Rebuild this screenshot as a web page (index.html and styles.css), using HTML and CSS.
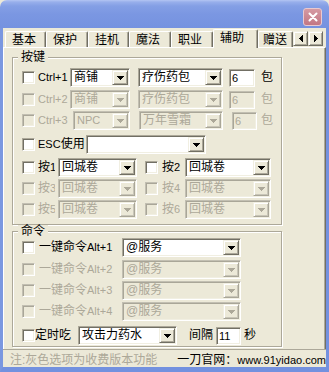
FILE: index.html
```html
<!DOCTYPE html>
<html lang="zh-CN">
<head>
<meta charset="utf-8">
<title>辅助</title>
<link rel="stylesheet" href="styles.css">
</head>
<body>
<div class="win">
  <div class="titlebar">
    <button class="close" aria-label="关闭"><svg width="10" height="10" viewBox="0 0 10 10"><path d="M1.5 1.5l7 7M8.5 1.5l-7 7" stroke="#fff" stroke-width="2" stroke-linecap="round"/></svg></button>
  </div>
  <div class="frame">
    <div class="tabstrip">
      <div class="tablist">
        <span class="tab t41">基本</span>
        <span class="tab t42">保护</span>
        <span class="tab t41">挂机</span>
        <span class="tab t42">魔法</span>
        <span class="tab t42">职业</span>
        <span class="tab sel">辅助</span>
        <span class="tab last">赠送</span>
      </div>
      <div class="scroll">
        <span class="sbtn"><svg width="4" height="7" viewBox="0 0 4 7"><path d="M3 0h1v7H3zM2 1h1v5H2zM1 2h1v3H1zM0 3h1v1H0z"/></svg></span>
        <span class="sbtn"><svg width="4" height="7" viewBox="0 0 4 7"><path d="M0 0h1v7H0zM1 1h1v5H1zM2 2h1v3H2zM3 3h1v1H3z"/></svg></span>
      </div>
    </div>

    <div class="panel">
      <fieldset class="group g1">
        <legend>按键</legend>

        <div class="row mt4">
          <span class="cb"></span>
          <span class="lbl ml3 w32 lt">Ctrl+1</span>
          <span class="combo w60"><span class="val">商铺</span><span class="btn"><svg width="7" height="4" viewBox="0 0 7 4"><path d="M0 0h7v1H0zM1 1h5v1H1zM2 2h3v1H2zM3 3h1v1H3z"/></svg></span></span>
          <span class="combo w85 ml8"><span class="val">疗伤药包</span><span class="btn"><svg width="7" height="4" viewBox="0 0 7 4"><path d="M0 0h7v1H0zM1 1h5v1H1zM2 2h3v1H2zM3 3h1v1H3z"/></svg></span></span>
          <span class="inp w26 ml6 lt">6</span>
          <span class="lbl ml6">包</span>
        </div>

        <div class="row mt3 dis">
          <span class="cb"></span>
          <span class="lbl ml3 w32 lt">Ctrl+2</span>
          <span class="combo w60"><span class="val">商铺</span><span class="btn"><svg width="7" height="4" viewBox="0 0 7 4"><path d="M0 0h7v1H0zM1 1h5v1H1zM2 2h3v1H2zM3 3h1v1H3z"/></svg></span></span>
          <span class="combo w85 ml8"><span class="val">疗伤药包</span><span class="btn"><svg width="7" height="4" viewBox="0 0 7 4"><path d="M0 0h7v1H0zM1 1h5v1H1zM2 2h3v1H2zM3 3h1v1H3z"/></svg></span></span>
          <span class="inp w26 ml6 lt">6</span>
          <span class="lbl ml6">包</span>
        </div>

        <div class="row mt2 dis">
          <span class="cb"></span>
          <span class="lbl ml3 w35 lt">Ctrl+3</span>
          <span class="combo w57"><span class="val lt">NPC</span><span class="btn"><svg width="7" height="4" viewBox="0 0 7 4"><path d="M0 0h7v1H0zM1 1h5v1H1zM2 2h3v1H2zM3 3h1v1H3z"/></svg></span></span>
          <span class="combo w84 ml9"><span class="val">万年雪霜</span><span class="btn"><svg width="7" height="4" viewBox="0 0 7 4"><path d="M0 0h7v1H0zM1 1h5v1H1zM2 2h3v1H2zM3 3h1v1H3z"/></svg></span></span>
          <span class="inp w25 ml9 lt">6</span>
          <span class="lbl ml4">包</span>
        </div>

        <div class="row mt5">
          <span class="cb"></span>
          <span class="lbl ml3 w48"><span class="lt">ESC</span>使用</span>
          <span class="combo w120"><span class="val"></span><span class="btn"><svg width="7" height="4" viewBox="0 0 7 4"><path d="M0 0h7v1H0zM1 1h5v1H1zM2 2h3v1H2zM3 3h1v1H3z"/></svg></span></span>
        </div>

        <div class="row mt4">
          <span class="cb"></span>
          <span class="lbl clip ml3 w17">按<span class="lt">1</span></span>
          <span class="combo w79 ml3"><span class="val">回城卷</span><span class="btn"><svg width="7" height="4" viewBox="0 0 7 4"><path d="M0 0h7v1H0zM1 1h5v1H1zM2 2h3v1H2zM3 3h1v1H3z"/></svg></span></span>
          <span class="cb ml8"></span>
          <span class="lbl clip ml4 w20">按<span class="lt">2</span></span>
          <span class="combo w86 ml3"><span class="val">回城卷</span><span class="btn"><svg width="7" height="4" viewBox="0 0 7 4"><path d="M0 0h7v1H0zM1 1h5v1H1zM2 2h3v1H2zM3 3h1v1H3z"/></svg></span></span>
        </div>

        <div class="row mt2 dis">
          <span class="cb"></span>
          <span class="lbl clip ml3 w17">按<span class="lt">3</span></span>
          <span class="combo w79 ml3"><span class="val">回城卷</span><span class="btn"><svg width="7" height="4" viewBox="0 0 7 4"><path d="M0 0h7v1H0zM1 1h5v1H1zM2 2h3v1H2zM3 3h1v1H3z"/></svg></span></span>
          <span class="cb ml8"></span>
          <span class="lbl clip ml4 w20">按<span class="lt">4</span></span>
          <span class="combo w86 ml3"><span class="val">回城卷</span><span class="btn"><svg width="7" height="4" viewBox="0 0 7 4"><path d="M0 0h7v1H0zM1 1h5v1H1zM2 2h3v1H2zM3 3h1v1H3z"/></svg></span></span>
        </div>

        <div class="row mt2 dis">
          <span class="cb"></span>
          <span class="lbl clip ml3 w17">按<span class="lt">5</span></span>
          <span class="combo w79 ml3"><span class="val">回城卷</span><span class="btn"><svg width="7" height="4" viewBox="0 0 7 4"><path d="M0 0h7v1H0zM1 1h5v1H1zM2 2h3v1H2zM3 3h1v1H3z"/></svg></span></span>
          <span class="cb ml8"></span>
          <span class="lbl clip ml4 w20">按<span class="lt">6</span></span>
          <span class="combo w86 ml3"><span class="val">回城卷</span><span class="btn"><svg width="7" height="4" viewBox="0 0 7 4"><path d="M0 0h7v1H0zM1 1h5v1H1zM2 2h3v1H2zM3 3h1v1H3z"/></svg></span></span>
        </div>
      </fieldset>

      <fieldset class="group g2">
        <legend>命令</legend>

        <div class="row mt1">
          <span class="cb"></span>
          <span class="lbl ml4 w83">一键命令<span class="lt">Alt+1</span></span>
          <span class="combo w119"><span class="val">@服务</span><span class="btn"><svg width="7" height="4" viewBox="0 0 7 4"><path d="M0 0h7v1H0zM1 1h5v1H1zM2 2h3v1H2zM3 3h1v1H3z"/></svg></span></span>
        </div>

        <div class="row mt3 dis">
          <span class="cb"></span>
          <span class="lbl ml4 w83">一键命令<span class="lt">Alt+2</span></span>
          <span class="combo w119"><span class="val">@服务</span><span class="btn"><svg width="7" height="4" viewBox="0 0 7 4"><path d="M0 0h7v1H0zM1 1h5v1H1zM2 2h3v1H2zM3 3h1v1H3z"/></svg></span></span>
        </div>

        <div class="row mt2 dis">
          <span class="cb"></span>
          <span class="lbl ml4 w83">一键命令<span class="lt">Alt+3</span></span>
          <span class="combo w119"><span class="val">@服务</span><span class="btn"><svg width="7" height="4" viewBox="0 0 7 4"><path d="M0 0h7v1H0zM1 1h5v1H1zM2 2h3v1H2zM3 3h1v1H3z"/></svg></span></span>
        </div>

        <div class="row mt2 dis">
          <span class="cb"></span>
          <span class="lbl ml4 w83">一键命令<span class="lt">Alt+4</span></span>
          <span class="combo w119"><span class="val">@服务</span><span class="btn"><svg width="7" height="4" viewBox="0 0 7 4"><path d="M0 0h7v1H0zM1 1h5v1H1zM2 2h3v1H2zM3 3h1v1H3z"/></svg></span></span>
        </div>

        <div class="row mt5">
          <span class="cb"></span>
          <span class="lbl w43">定时吃</span>
          <span class="combo w99"><span class="val">攻击力药水</span><span class="btn"><svg width="7" height="4" viewBox="0 0 7 4"><path d="M0 0h7v1H0zM1 1h5v1H1zM2 2h3v1H2zM3 3h1v1H3z"/></svg></span></span>
          <span class="lbl ml12 w24">间隔</span>
          <span class="inp w25 ml3 lt">11</span>
          <span class="lbl ml3">秒</span>
        </div>
      </fieldset>
    </div>

    <div class="status">
      <span class="note">注:灰色选项为收费版本功能</span>
      <span class="site">一刀官网：<span class="lt">www.91yidao.com</span></span>
    </div>
  </div>
</div>
</body>
</html>
```

FILE: styles.css
```css
* { box-sizing: border-box; }

html, body {
  margin: 0;
  padding: 0;
}

body {
  width: 329px;
  height: 372px;
  overflow: hidden;
  background: #ECE9D8;
  color: #000;
  font-family: "Liberation Sans", "Noto Sans CJK SC", sans-serif;
  font-size: 12px;
}

.lt { font-size: 11px; }

.win {
  height: 372px;
  display: flex;
  flex-direction: column;
}

/* ---------- title bar ---------- */
.titlebar {
  flex: none;
  height: 28px;
  display: flex;
  justify-content: flex-end;
  align-items: flex-start;
  padding: 8px 7px 0 0;
  border-radius: 7px 7px 0 0;
  background: linear-gradient(#B3C5F3 0, #98AFEB 2px, #849FE5 6px, #7B97E2 50%, #7592E0 100%);
}

.close {
  width: 19px;
  height: 18px;
  padding: 0;
  border: 1px solid #E9C9CF;
  border-radius: 3px;
  background: linear-gradient(#D59AA3, #C27784);
  display: flex;
  align-items: center;
  justify-content: center;
}

/* ---------- frame ---------- */
.frame {
  flex: 1;
  display: flex;
  flex-direction: column;
  border-left: 3px solid #7A97E0;
  border-right: 3px solid #7391DF;
  border-bottom: 5px solid #7391DF;
}

/* ---------- tabs ---------- */
.tabstrip {
  flex: none;
  height: 19px;
  display: flex;
  align-items: flex-start;
}

.tablist {
  width: 290px;
  height: 19px;
  display: flex;
  align-items: flex-end;
  padding-left: 2px;
}

.tab {
  flex: none;
  height: 16px;
  padding: 1px 0 0 6px;
  line-height: 14px;
  white-space: nowrap;
  border-top: 1px solid #fff;
  border-left: 1px solid #fff;
  border-right: 1px solid #716F64;
  box-shadow: inset -1px 0 #ACA899;
  border-radius: 2px 2px 0 0;
  background: #ECE9D8;
}

.t41 { width: 41px; }
.t42 { width: 42px; }

.sel {
  width: 45px;
  height: 19px;
  margin-bottom: -1px;
  position: relative;
  z-index: 1;
}

.last {
  width: 35px;
  padding-left: 4px;
  overflow: hidden;
}

.scroll {
  display: flex;
  margin-top: 3px;
}

.sbtn {
  width: 15px;
  height: 15px;
  display: flex;
  align-items: center;
  justify-content: center;
  background: #ECE9D8;
  border: 1px solid;
  border-color: #F1EFE2 #716F64 #716F64 #F1EFE2;
  box-shadow: inset 1px 1px #fff, inset -1px -1px #ACA899;
}

.sbtn svg { fill: #000; }

/* ---------- panel ---------- */
.panel {
  flex: none;
  height: 302px;
  border-top: 1px solid #fff;
  border-left: 1px solid #fff;
  border-right: 1px solid #716F64;
  box-shadow: inset -1px 0 #ACA899;
  padding: 2px 0 0 8px;
  display: flex;
  flex-direction: column;
}

.group {
  margin: 0;
  padding: 0 0 0 9px;
  width: 270px;
  min-width: 0;
  border: 1px solid #ACA899;
  box-shadow: inset 1px 1px #fff, 1px 1px #fff;
}

.group legend {
  margin-left: -4px;
  padding: 0 3px;
  line-height: 14px;
  background: #ECE9D8;
}

.g1 { height: 175px; }
.g2 { height: 122px; }
.g2 legend { line-height: 12px; }

/* ---------- rows ---------- */
.row {
  display: flex;
  align-items: center;
  height: 19px;
}

.mt1 { margin-top: 1px; }
.mt2 { margin-top: 2px; }
.mt3 { margin-top: 3px; }
.mt4 { margin-top: 4px; }
.mt5 { margin-top: 5px; }

.ml3 { margin-left: 3px; }
.ml4 { margin-left: 4px; }
.ml6 { margin-left: 6px; }
.ml8 { margin-left: 8px; }
.ml9 { margin-left: 9px; }
.ml12 { margin-left: 12px; }

.lbl {
  flex: none;
  line-height: 19px;
  white-space: nowrap;
}

.clip { overflow: hidden; }

.w17 { width: 17px; }
.w20 { width: 20px; }
.w24 { width: 24px; }
.w25 { width: 25px; }
.w26 { width: 26px; }
.w32 { width: 32px; }
.w35 { width: 35px; }
.w43 { width: 43px; }
.w48 { width: 48px; }
.w57 { width: 57px; }
.w60 { width: 60px; }
.w79 { width: 79px; }
.w83 { width: 83px; }
.w84 { width: 84px; }
.w85 { width: 85px; }
.w86 { width: 86px; }
.w99 { width: 99px; }
.w119 { width: 119px; }
.w120 { width: 120px; }

/* sunken controls */
.cb,
.combo,
.inp {
  flex: none;
  background: #fff;
  border: 1px solid;
  border-color: #ACA899 #fff #fff #ACA899;
  box-shadow: inset 1px 1px #716F64, inset -1px -1px #F1EFE2;
}

.cb {
  width: 13px;
  height: 13px;
}

.combo {
  height: 19px;
  padding: 1px;
  display: flex;
}

.combo .val {
  flex: 1;
  min-width: 0;
  padding-left: 2px;
  line-height: 15px;
  white-space: nowrap;
  overflow: hidden;
}

.combo .btn {
  flex: none;
  width: 16px;
  height: 15px;
  display: flex;
  align-items: center;
  justify-content: center;
  background: #ECE9D8;
  border: 1px solid;
  border-color: #F1EFE2 #716F64 #716F64 #F1EFE2;
  box-shadow: inset 1px 1px #fff, inset -1px -1px #ACA899;
}

.combo .btn svg { fill: currentColor; }

.inp {
  height: 18px;
  padding-left: 2px;
  line-height: 16px;
}

/* disabled rows */
.dis { color: #ACA899; }

.dis .cb,
.dis .combo,
.dis .inp {
  background: #ECE9D8;
  border-color: #C2BFB2 #fff #fff #C2BFB2;
  box-shadow: inset 1px 1px #A9A698, inset -1px -1px #F1EFE2;
}

.dis .combo .btn {
  border-color: #F1EFE2 #A9A698 #A9A698 #F1EFE2;
  box-shadow: inset 1px 1px #fff, inset -1px -1px #C9C6B8;
}

/* ---------- status ---------- */
.status {
  flex: 1;
  display: flex;
  justify-content: space-between;
  align-items: flex-start;
  padding: 3px 0 0 7px;
  line-height: 14px;
  border-top: 1px solid #ACA899;
  white-space: nowrap;
}

.note { color: #ACA899; }
```
